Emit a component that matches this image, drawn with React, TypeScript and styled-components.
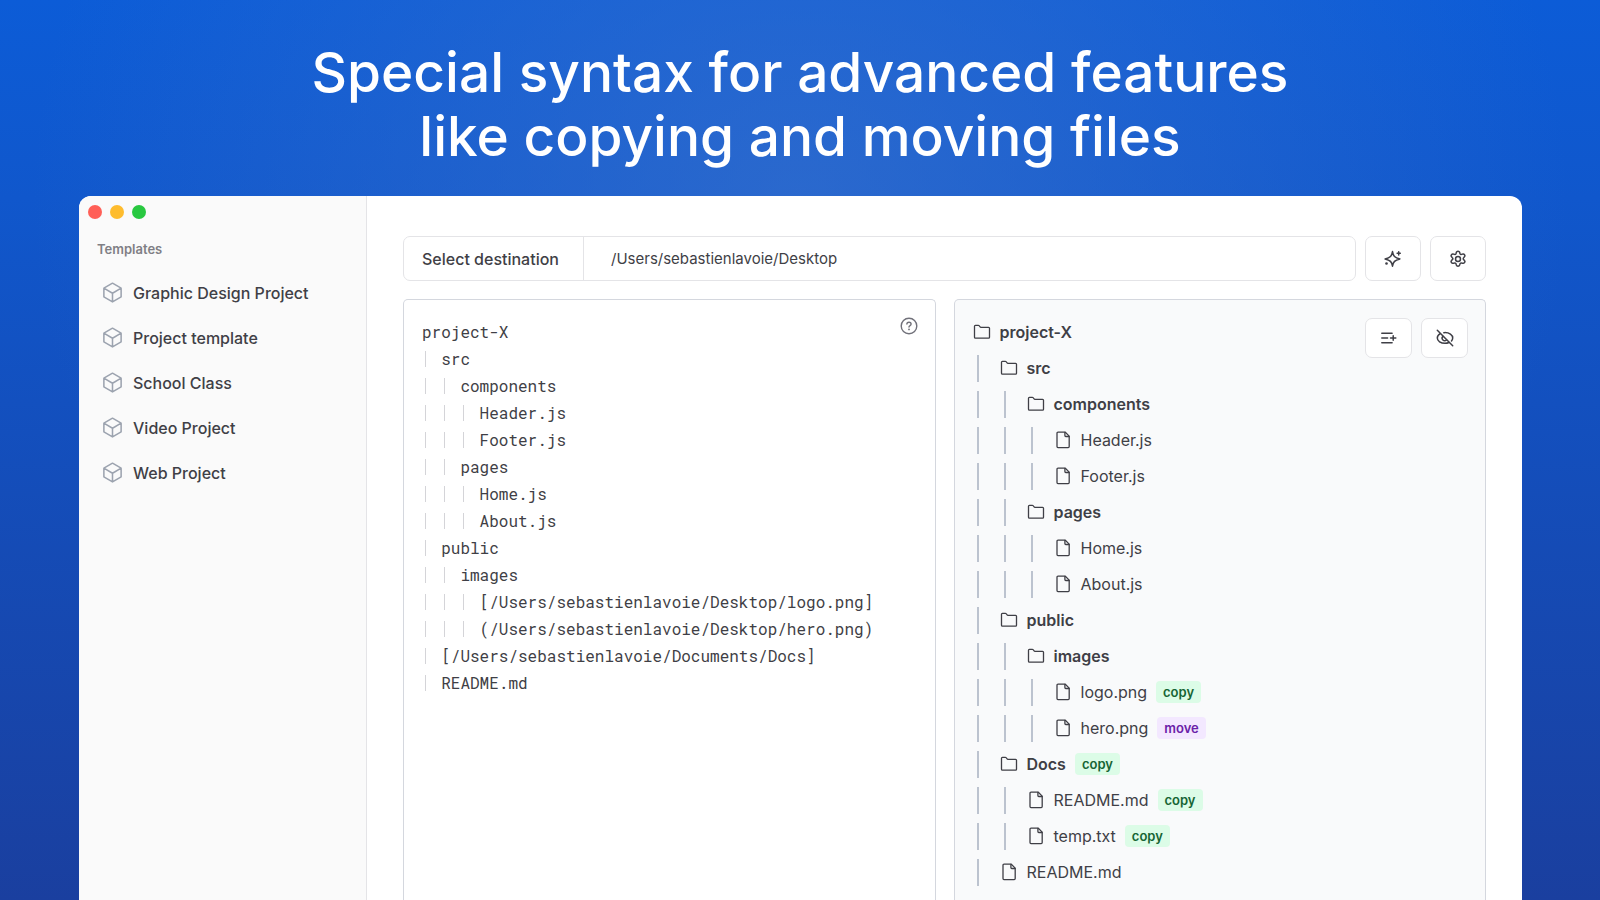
import React from "react";
import styled, { createGlobalStyle, css } from "styled-components";

const SANS = `"Inter", "Liberation Sans", sans-serif`;
const MONO = `"Roboto Mono", "DejaVu Sans Mono", monospace`;

const GlobalStyle = createGlobalStyle`
  *, *::before, *::after { box-sizing: border-box; }
  body {
    margin: 0;
    font-family: ${SANS};
    font-size: 16px;
    color: #3f3f46;
    -webkit-font-smoothing: antialiased;
  }
`;

const Page = styled.div`
  height: 100vh;
  overflow: hidden;
  display: flex;
  flex-direction: column;
  background:
    radial-gradient(ellipse 48% 75% at 50% 22%, rgba(54, 112, 206, 0.7), rgba(54, 112, 206, 0) 100%),
    linear-gradient(180deg, #0c5cd7 0%, #1057cc 22%, #1a3f9f 100%);
`;

const Headline = styled.h1`
  margin: 0;
  padding: 40px 24px 28px;
  text-align: center;
  color: #ffffff;
  font-family: ${SANS};
  font-size: 55px;
  line-height: 64px;
  font-weight: 500;
`;

const AppWindow = styled.div`
  flex: 1;
  min-height: 0;
  display: flex;
  margin: 0 78px 0 79px;
  background: #ffffff;
  border-radius: 12px 12px 0 0;
  overflow: hidden;
`;

const Sidebar = styled.aside`
  flex: none;
  width: 288px;
  background: #fafafa;
  border-right: 1px solid #e4e4e7;
`;

const TrafficLights = styled.div`
  display: flex;
  gap: 8px;
  padding: 9px 9px 0;
`;

const Light = styled.span<{ $color: string }>`
  width: 14px;
  height: 14px;
  border-radius: 50%;
  background: ${(p) => p.$color};
`;

const SidebarTitle = styled.h2`
  margin: 20px 0 11px 18px;
  font-size: 13px;
  line-height: 20px;
  font-weight: 600;
  color: #7f7f85;
`;

const TemplateList = styled.ul`
  list-style: none;
  margin: 0;
  padding: 0 9px;
`;

const TemplateButton = styled.button`
  display: flex;
  align-items: center;
  gap: 9px;
  width: 100%;
  height: 45px;
  padding: 0 13px;
  border: 0;
  background: none;
  font: 500 16px/24px ${SANS};
  color: #3f3f46;
  text-align: left;
  svg { color: #9ca3af; }
`;

const Main = styled.main`
  flex: 1;
  min-width: 0;
  display: flex;
  flex-direction: column;
  gap: 18px;
  padding: 40px 36px 0;
`;

const Toolbar = styled.div`
  display: flex;
  gap: 9px;
`;

const outlined = css`
  border: 1px solid #e4e4e7;
  border-radius: 7px;
  background: #ffffff;
`;

const Destination = styled.div`
  ${outlined}
  flex: 1;
  display: flex;
  height: 45px;
  overflow: hidden;
`;

const DestinationButton = styled.button`
  width: 180px;
  padding: 0 18px;
  border: 0;
  border-right: 1px solid #e4e4e7;
  background: none;
  font: 500 16px/24px ${SANS};
  color: #3f3f46;
  text-align: left;
`;

const DestinationInput = styled.input`
  flex: 1;
  min-width: 0;
  padding: 0 27px;
  border: 0;
  outline: 0;
  background: none;
  font: 400 15px/24px ${SANS};
  color: #3f3f46;
`;

const IconButton = styled.button<{ $compact?: boolean }>`
  ${outlined}
  display: grid;
  place-items: center;
  width: ${(p) => (p.$compact ? 47 : 56)}px;
  height: ${(p) => (p.$compact ? 40 : 45)}px;
  padding: 0;
  color: #3f3f46;
`;

const Panels = styled.div`
  flex: 1;
  min-height: 0;
  display: grid;
  grid-template-columns: 1fr 1fr;
  gap: 18px;
`;

const Panel = styled.section<{ $tinted?: boolean }>`
  position: relative;
  min-height: 0;
  overflow: hidden;
  padding: ${(p) => (p.$tinted ? "14px" : "18px")} 18px 0;
  border: 1px solid #d4d7de;
  border-bottom: 0;
  border-radius: 5px 5px 0 0;
  background: ${(p) => (p.$tinted ? "#f9fafb" : "#ffffff")};
`;

const Editor = styled.div`
  display: grid;
  height: 100%;
  font: 400 16px/27px ${MONO};
  > * { grid-area: 1 / 1; }
`;

const EditorText = styled.textarea`
  width: 100%;
  height: 100%;
  padding: 0;
  border: 0;
  outline: 0;
  resize: none;
  overflow: hidden;
  background: none;
  font: inherit;
  color: #3f3f46;
  white-space: pre;
`;

const EditorGuideRow = styled.div`
  display: flex;
  align-items: center;
  height: 27px;
`;

const EditorGuide = styled.span`
  width: 2ch;
  height: 16px;
  padding-left: 3px;
  &::before {
    content: "";
    display: block;
    width: 1px;
    height: 100%;
    background: #d4d4d8;
  }
`;

const HelpButton = styled.button`
  position: absolute;
  top: 16px;
  right: 16px;
  display: grid;
  padding: 0;
  border: 0;
  background: none;
  color: #71717a;
`;

const PreviewActions = styled.div`
  position: absolute;
  top: 18px;
  right: 17px;
  display: flex;
  gap: 9px;
`;

const Tree = styled.ul`
  list-style: none;
  margin: 0;
  padding: 0;
`;

const TreeRow = styled.li<{ $folder: boolean }>`
  display: flex;
  align-items: center;
  height: 36px;
  line-height: 24px;
  font-weight: ${(p) => (p.$folder ? 600 : 400)};
`;

const TreeGuide = styled.span`
  flex: none;
  width: 27px;
  height: 27px;
  padding-left: 4px;
  &::before {
    content: "";
    display: block;
    width: 2px;
    height: 100%;
    background: #bcc3cf;
  }
`;

const TreeName = styled.span`
  margin: 0 9px;
`;

const Badge = styled.span<{ $kind: "copy" | "move" }>`
  padding: 0 7px;
  border-radius: 4px;
  font-size: 13px;
  line-height: 22px;
  font-weight: 600;
  color: ${(p) => (p.$kind === "copy" ? "#166534" : "#6b21a8")};
  background: ${(p) => (p.$kind === "copy" ? "#dcfce7" : "#f3e8ff")};
`;

const Glyph = styled.svg`
  flex: none;
  display: block;
  fill: none;
  stroke: currentColor;
  stroke-linecap: round;
  stroke-linejoin: round;
`;

const CubeIcon = () => (
  <Glyph width="23" height="23" viewBox="0 0 24 24" strokeWidth="1.6" aria-hidden="true">
    <path d="m21 7.5-9-5.25L3 7.5m18 0-9 5.25m9-5.25v9l-9 5.25M3 7.5l9 5.25M3 7.5v9l9 5.25m0-9v9" />
  </Glyph>
);

const FolderIcon = () => (
  <Glyph width="18" height="18" viewBox="0 0 18 18" strokeWidth="1.3" aria-hidden="true">
    <path d="M1.5 3.2c0-.5.4-.9.9-.9h2.9c.3 0 .6.1.8.4l1 1.2c.2.3.5.4.8.4h7.7c.5 0 .9.4.9.9v9c0 .5-.4.9-.9.9H2.4c-.5 0-.9-.4-.9-.9z" />
  </Glyph>
);

const FileIcon = () => (
  <Glyph width="18" height="18" viewBox="0 0 18 18" strokeWidth="1.3" aria-hidden="true">
    <path d="M3 2.2c0-.6.4-1 1-1h7.3l3.9 3.9v10.5c0 .6-.4 1-1 1H4c-.6 0-1-.4-1-1z" />
    <path d="M10.9 1.4v3.2c0 .5.4.9.9.9H15" />
  </Glyph>
);

const SparklesIcon = () => (
  <Glyph width="18" height="18" viewBox="0 0 18 18" strokeWidth="1.5" aria-hidden="true">
    <path d="M8.5 1.6c.7 4.4 2.2 6 7.4 7.3-5.2 1.3-6.7 2.9-7.4 7.3-.7-4.4-2.2-6-7.4-7.3 5.2-1.3 6.7-2.9 7.4-7.3z" />
    <path d="M14.7 1.7v3.2M13.1 3.3h3.2" />
    <path d="M2.5 13.5h.01" strokeWidth="2.6" />
  </Glyph>
);

const GearIcon = () => (
  <Glyph width="18" height="18" viewBox="0 0 24 24" strokeWidth="2" aria-hidden="true">
    <circle cx="12" cy="12" r="3.3" />
    <path d="M9.8 3.1c.3-1 1-1.5 2.2-1.5s1.9.5 2.2 1.5l.4 1.5c.3 1 1.3 1.5 2.2 1.2l1.5-.4c1-.3 1.9.1 2.5 1.1s.5 1.9-.2 2.6l-1.1 1.2c-.7.7-.7 1.8 0 2.5l1.1 1.2c.7.7.8 1.7.2 2.6s-1.5 1.4-2.5 1.1l-1.5-.4c-1-.3-1.900.3-2.2 1.2l-.4 1.5c-.3 1-1 1.5-2.2 1.5s-1.9-.5-2.2-1.5l-.4-1.5c-.3-1-1.3-1.5-2.2-1.2l-1.5.4c-1 .3-1.9-.1-2.5-1.1s-.5-1.9.2-2.6l1.1-1.2c.7-.7.7-1.8 0-2.5L3.4 9.1c-.7-.7-.8-1.7-.2-2.6s1.500-1.4 2.5-1.1l1.5.4c1 .3 1.9-.3 2.2-1.2z" />
  </Glyph>
);

const ListPlusIcon = () => (
  <Glyph width="18" height="18" viewBox="0 0 18 18" strokeWidth="1.5" aria-hidden="true">
    <path d="M1.8 4.3h10.3M1.8 9h5.8M1.8 13.7h10.3M10.5 9h5.3M13.2 6.8v4.4" />
  </Glyph>
);

const EyeOffIcon = () => (
  <Glyph width="18" height="18" viewBox="0 0 18 18" strokeWidth="1.5" aria-hidden="true">
    <path d="M1.3 1.3l15.4 15.4" />
    <path d="M4.2 4.7C2.5 5.7 1.3 7.3 1.3 9c0 3 3.5 5.3 7.7 5.3 1.5 0 2.8-.3 4-.8" />
    <path d="M7.8 3.7c.4 0 .8-.1 1.2-.1 4.2 0 7.7 2.4 7.7 5.4 0 1-.4 2-1.2 2.9" />
    <path d="M6.9 7.4a2.5 2.5 0 0 0 3.6 3.6" />
  </Glyph>
);

const HelpIcon = () => (
  <Glyph width="20" height="20" viewBox="0 0 20 20" strokeWidth="1.4" aria-hidden="true">
    <circle cx="10" cy="10" r="7.8" />
    <path d="M7.9 8.1c0-1.1.9-1.9 2.1-1.9s2.1.8 2.1 1.8c0 .8-.5 1.2-1.1 1.6-.7.4-1 .7-1 1.4" />
    <path d="M10 13.4h.01" strokeWidth="1.8" />
  </Glyph>
);

const templates = [
  "Graphic Design Project",
  "Project template",
  "School Class",
  "Video Project",
  "Web Project",
];

const source: [number, string][] = [
  [0, "project-X"],
  [1, "src"],
  [2, "components"],
  [3, "Header.js"],
  [3, "Footer.js"],
  [2, "pages"],
  [3, "Home.js"],
  [3, "About.js"],
  [1, "public"],
  [2, "images"],
  [3, "[/Users/sebastienlavoie/Desktop/logo.png]"],
  [3, "(/Users/sebastienlavoie/Desktop/hero.png)"],
  [1, "[/Users/sebastienlavoie/Documents/Docs]"],
  [1, "README.md"],
];

type Entry = { depth: number; name: string; folder?: boolean; badge?: "copy" | "move" };

const entries: Entry[] = [
  { depth: 0, name: "project-X", folder: true },
  { depth: 1, name: "src", folder: true },
  { depth: 2, name: "components", folder: true },
  { depth: 3, name: "Header.js" },
  { depth: 3, name: "Footer.js" },
  { depth: 2, name: "pages", folder: true },
  { depth: 3, name: "Home.js" },
  { depth: 3, name: "About.js" },
  { depth: 1, name: "public", folder: true },
  { depth: 2, name: "images", folder: true },
  { depth: 3, name: "logo.png", badge: "copy" },
  { depth: 3, name: "hero.png", badge: "move" },
  { depth: 1, name: "Docs", folder: true, badge: "copy" },
  { depth: 2, name: "README.md", badge: "copy" },
  { depth: 2, name: "temp.txt", badge: "copy" },
  { depth: 1, name: "README.md" },
];

const range = (n: number) => Array.from({ length: n }, (_, i) => i);

export default function App() {
  return (
    <>
      <GlobalStyle />
      <Page>
        <Headline>
          Special syntax for advanced features
          <br />
          like copying and moving files
        </Headline>
        <AppWindow>
          <Sidebar>
            <TrafficLights>
              <Light $color="#ff5f57" />
              <Light $color="#febc2e" />
              <Light $color="#28c840" />
            </TrafficLights>
            <SidebarTitle>Templates</SidebarTitle>
            <TemplateList>
              {templates.map((name) => (
                <li key={name}>
                  <TemplateButton type="button">
                    <CubeIcon />
                    {name}
                  </TemplateButton>
                </li>
              ))}
            </TemplateList>
          </Sidebar>
          <Main>
            <Toolbar>
              <Destination>
                <DestinationButton type="button">Select destination</DestinationButton>
                <DestinationInput
                  type="text"
                  aria-label="Destination folder"
                  defaultValue="/Users/sebastienlavoie/Desktop"
                />
              </Destination>
              <IconButton type="button" aria-label="Generate">
                <SparklesIcon />
              </IconButton>
              <IconButton type="button" aria-label="Settings">
                <GearIcon />
              </IconButton>
            </Toolbar>
            <Panels>
              <Panel>
                <Editor>
                  <div aria-hidden="true">
                    {source.map(([depth], row) => (
                      <EditorGuideRow key={row}>
                        {range(depth).map((i) => (
                          <EditorGuide key={i} />
                        ))}
                      </EditorGuideRow>
                    ))}
                  </div>
                  <EditorText
                    aria-label="Structure"
                    spellCheck={false}
                    defaultValue={source.map(([d, t]) => "  ".repeat(d) + t).join("\n")}
                  />
                </Editor>
                <HelpButton type="button" aria-label="Help">
                  <HelpIcon />
                </HelpButton>
              </Panel>
              <Panel $tinted>
                <Tree>
                  {entries.map((entry, row) => (
                    <TreeRow key={row} $folder={!!entry.folder}>
                      {range(entry.depth).map((i) => (
                        <TreeGuide key={i} />
                      ))}
                      {entry.folder ? <FolderIcon /> : <FileIcon />}
                      <TreeName>{entry.name}</TreeName>
                      {entry.badge && <Badge $kind={entry.badge}>{entry.badge}</Badge>}
                    </TreeRow>
                  ))}
                </Tree>
                <PreviewActions>
                  <IconButton $compact type="button" aria-label="Add lines">
                    <ListPlusIcon />
                  </IconButton>
                  <IconButton $compact type="button" aria-label="Hide preview">
                    <EyeOffIcon />
                  </IconButton>
                </PreviewActions>
              </Panel>
            </Panels>
          </Main>
        </AppWindow>
      </Page>
    </>
  );
}
